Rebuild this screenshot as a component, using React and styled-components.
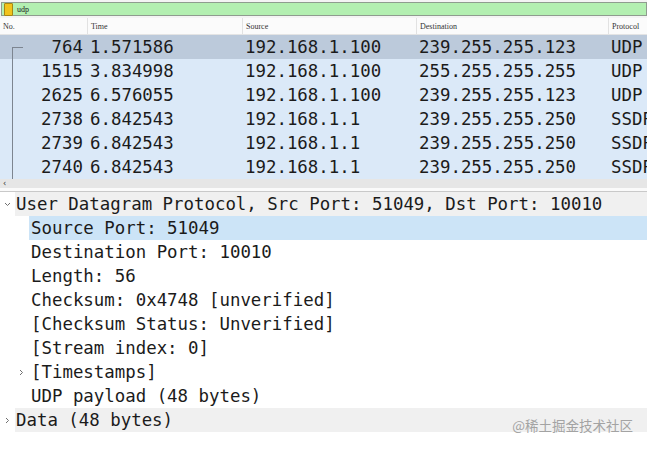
import React from 'react';
import styled, { createGlobalStyle } from 'styled-components';

const GlobalStyle = createGlobalStyle`
  html, body {
    margin: 0;
    padding: 0;
    background: #ffffff;
    overflow: hidden;
  }
`;

const mono = `"DejaVu Sans Mono", "Liberation Mono", monospace`;

const packets = [
  { no: 764, time: '1.571586', src: '192.168.1.100', dst: '239.255.255.123', proto: 'UDP', selected: true },
  { no: 1515, time: '3.834998', src: '192.168.1.100', dst: '255.255.255.255', proto: 'UDP' },
  { no: 2625, time: '6.576055', src: '192.168.1.100', dst: '239.255.255.123', proto: 'UDP' },
  { no: 2738, time: '6.842543', src: '192.168.1.1', dst: '239.255.255.250', proto: 'SSDP' },
  { no: 2739, time: '6.842543', src: '192.168.1.1', dst: '239.255.255.250', proto: 'SSDP' },
  { no: 2740, time: '6.842543', src: '192.168.1.1', dst: '239.255.255.250', proto: 'SSDP' },
];

const details = [
  { level: 0, text: 'User Datagram Protocol, Src Port: 51049, Dst Port: 10010', toggle: 'open', tone: 'hover' },
  { level: 1, text: 'Source Port: 51049', tone: 'selected' },
  { level: 1, text: 'Destination Port: 10010' },
  { level: 1, text: 'Length: 56' },
  { level: 1, text: 'Checksum: 0x4748 [unverified]' },
  { level: 1, text: '[Checksum Status: Unverified]' },
  { level: 1, text: '[Stream index: 0]' },
  { level: 1, text: '[Timestamps]', toggle: 'closed' },
  { level: 1, text: 'UDP payload (48 bytes)' },
  { level: 0, text: 'Data (48 bytes)', toggle: 'closed', tone: 'hover' },
];

const Window = styled.div`
  position: relative;
  width: 647px;
  height: 449px;
  overflow: hidden;
  background: #ffffff;
  color: #1b1b1b;
`;

const FilterBar = styled.div`
  height: 18px;
  padding: 2px 0 2px 1px;
  box-sizing: border-box;
  background: #f4f4f4;
  display: flex;
`;

const FilterInput = styled.div`
  flex: 1;
  display: flex;
  align-items: center;
  gap: 4px;
  padding-left: 2px;
  background: #b3efb1;
  border: 1px solid #8f9c8f;
  font-family: "Liberation Serif", serif;
  font-size: 8px;
  color: #222;
`;

const FilterIcon = styled.span`
  width: 7px;
  height: 11px;
  border-radius: 1px;
  background: #f2c21b;
  border: 1px solid #a88612;
`;

const PacketList = styled.div`
  position: relative;
`;

const Columns = `87px 155px 174px 192px 1fr`;

const HeaderRow = styled.div`
  display: grid;
  grid-template-columns: ${Columns};
  height: 16px;
  background: #fbfbfb;
  border-bottom: 1px solid #e4e4e4;
  font-family: "Liberation Serif", serif;
  font-size: 8px;
  color: #333;
`;

const HeaderCell = styled.div`
  display: flex;
  align-items: center;
  padding-left: 3px;
  border-left: ${(p) => (p.$first ? 'none' : '1px solid #e2e2e2')};
  white-space: nowrap;
  overflow: hidden;
`;

const Row = styled.div`
  display: grid;
  grid-template-columns: ${Columns};
  height: 24px;
  align-items: center;
  background: ${(p) => (p.$selected ? '#bccadb' : '#dbe9f8')};
  font-family: ${mono};
  font-size: 17.4px;
  white-space: nowrap;
`;

const Cell = styled.div`
  padding: ${(p) => (p.$right ? '0 4px 0 0' : '0 0 0 3px')};
  text-align: ${(p) => (p.$right ? 'right' : 'left')};
  overflow: hidden;
`;

const Related = styled.div`
  position: absolute;
  left: 12px;
  top: 29px;
  width: 10px;
  height: 131px;
  border-left: 1px solid #7d8590;
  border-top: 1px solid #7d8590;
  pointer-events: none;
`;

const HScroll = styled.div`
  height: 9px;
  background: #e6e6e6;
  display: flex;
  align-items: center;
  padding-left: 3px;
  font-family: "DejaVu Sans", sans-serif;
  font-size: 8px;
  color: #333;
`;

const Splitter = styled.div`
  height: 3px;
  border-bottom: 1px solid #c9c9c9;
  background: #fafafa;
`;

const Details = styled.div`
  font-family: ${mono};
  font-size: 17.4px;
  white-space: nowrap;
`;

const DetailRow = styled.div`
  display: flex;
  height: 24px;
  padding-left: ${(p) => p.$level * 14}px;
`;

const Toggle = styled.span`
  width: 15px;
  flex: none;
  display: flex;
  align-items: center;
  justify-content: center;
`;

const Label = styled.span`
  flex: 1;
  display: flex;
  align-items: center;
  padding-left: ${(p) => (p.$level ? 2 : 1)}px;
  background: ${(p) =>
    p.$tone === 'selected' ? '#cce4f7' : p.$tone === 'hover' ? '#f0f0f0' : 'transparent'};
`;

const Watermark = styled.div`
  position: absolute;
  right: 14px;
  bottom: 14px;
  font-family: "Noto Sans CJK SC", sans-serif;
  font-size: 13.5px;
  color: #a3a3a3;
`;

const Chevron = ({ open }) => (
  <svg width="7" height="7" viewBox="0 0 7 7">
    <path
      d={open ? 'M1 2 L3.5 4.5 L6 2' : 'M2 1 L4.5 3.5 L2 6'}
      fill="none"
      stroke="#6f6f6f"
      strokeWidth="1"
    />
  </svg>
);

export default function App() {
  return (
    <Window>
      <GlobalStyle />
      <FilterBar>
        <FilterInput>
          <FilterIcon />
          udp
        </FilterInput>
      </FilterBar>
      <PacketList>
        <HeaderRow>
          <HeaderCell $first>No.</HeaderCell>
          <HeaderCell>Time</HeaderCell>
          <HeaderCell>Source</HeaderCell>
          <HeaderCell>Destination</HeaderCell>
          <HeaderCell>Protocol</HeaderCell>
        </HeaderRow>
        {packets.map((p) => (
          <Row key={p.no} $selected={p.selected}>
            <Cell $right>{p.no}</Cell>
            <Cell>{p.time}</Cell>
            <Cell>{p.src}</Cell>
            <Cell>{p.dst}</Cell>
            <Cell>{p.proto}</Cell>
          </Row>
        ))}
        <Related />
        <HScroll>&lsaquo;</HScroll>
      </PacketList>
      <Splitter />
      <Details>
        {details.map((d, i) => (
          <DetailRow key={i} $level={d.level}>
            <Toggle>{d.toggle && <Chevron open={d.toggle === 'open'} />}</Toggle>
            <Label $tone={d.tone} $level={d.level}>{d.text}</Label>
          </DetailRow>
        ))}
      </Details>
      <Watermark>@稀土掘金技术社区</Watermark>
    </Window>
  );
}
